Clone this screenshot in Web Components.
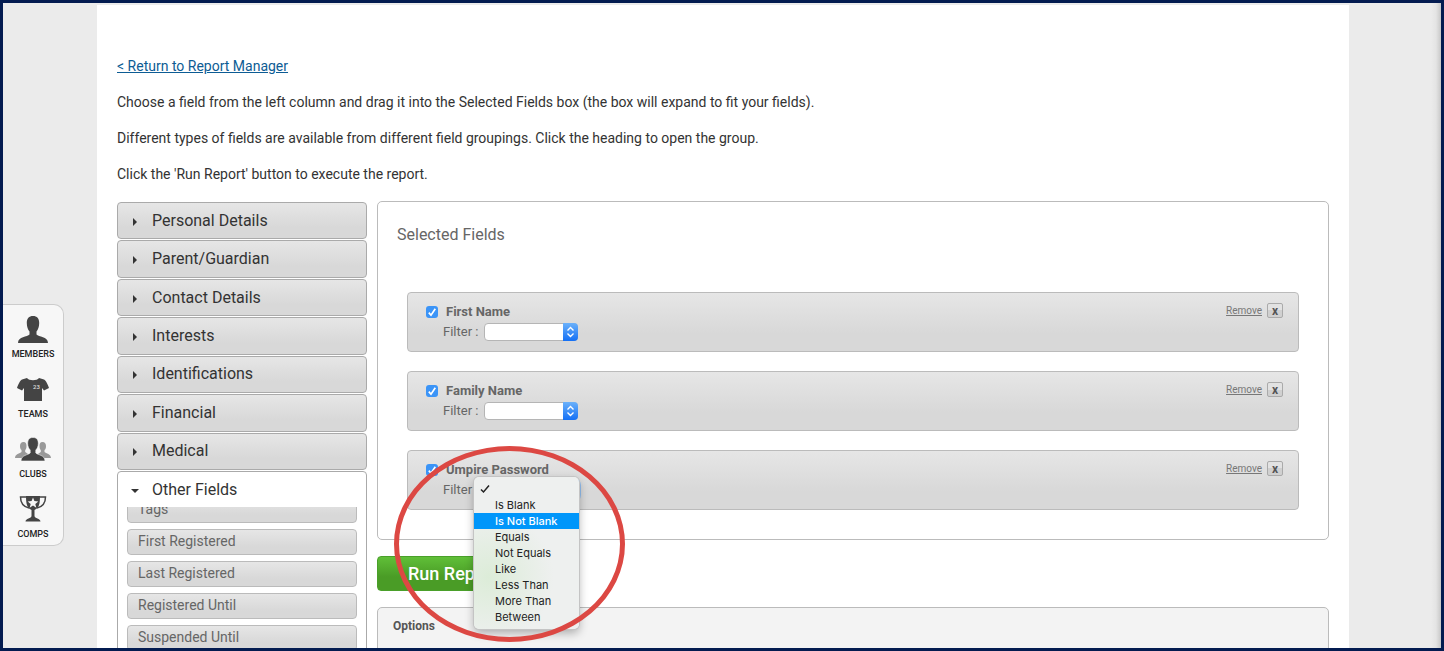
<!DOCTYPE html>
<html lang="en">
<head>
<meta charset="utf-8">
<title>Report Manager</title>
<style>
    body {
        margin: 0;
        font-family: Roboto, "Liberation Sans", sans-serif;
        font-size: 14px;
        line-height: 18px;
        color: #333;
    }
</style>
</head>
<body>
<report-app></report-app>

<script>
const CHECK = '<path d="M2.8 6.6 5 9.2 9.3 2.8" fill="none" stroke="#fff" stroke-width="1.7"/>';

const ICONS = {
    members: `<path fill="#444" d="M18 1c4 0 6.200 2.500 6.200 7 0 4-1.200 6.500-2.700 8.500v3c2 2.500 11.500 2 11.500 8.500H3c0-6.500 9.500-6 11.500-8.500v-3C13 14.500 11.800 12 11.800 8c0-4.500 2.200-7 6.200-7z"/>`,
    teams: `<path fill="#444" d="M12 3c2 3 10 3 12 0l5 1.500c2 1 4 5.500 5 8.500l-5 2.500-2-2.500v13H9V13l-2 2.500L2 13c1-3 3-7.500 5-8.500z"/>
            <text x="18" y="14" fill="#ddd" font-size="6">23</text>`,
    clubs: `<g fill="#999"><path d="M8.500 7c2.500 0 3 2 3 4 0 2-.5 3.500-1.300 4v2c1 1 4.300 1.500 4.300 6H0c0-4 5-4.500 6.500-6v-2C5.500 14.500 5 13 5 11c0-2 1-4 3.500-4z"/>
            <path d="M27.500 7c-2.500 0-3 2-3 4 0 2 .5 3.500 1.300 4v2c-1 1-4.300 1.500-4.300 6H36c0-4-5-4.500-6.500-6v-2c1-.5 1.500-2 1.500-4 0-2-1-4-3.500-4z"/></g>
            <path fill="#444" stroke="#f7f7f7" stroke-width=".6" d="M18 2.500c4 0 5.300 2.500 5.300 6 0 3-1 5-2.500 6.500v3c2 2 9.200 2 9.200 8H6c0-6 7.200-6 9.200-8v-3c-1.500-1.500-2.500-3.500-2.500-6.500 0-3.500 1.300-6 5.300-6z"/>`,
    comps: `<path fill="#444" d="M11 1h14c0 8-1 12-5.500 14v6c0 2.500 6 2.500 6 5.500h-15c0-3 6-3 6-5.500v-6C12 13 11 9 11 1z"/>
            <path fill="none" stroke="#444" stroke-width="1.500" d="M11 2H5.500c0 6 2 9.500 8.500 11M25 2h5.500c0 6-2 9.500-8.500 11"/>
            <path fill="#f7f7f7" d="m18 2.500 1.400 3.600 3.900.3-3 2.500 1 3.800-3.300-2.100-3.300 2.100 1-3.800-3-2.500 3.900-.3z"/>`
};

class SideLink extends HTMLElement {
    constructor() {
        super();
        this.attachShadow({ mode: 'open' });
    }

    connectedCallback() {
        this.shadowRoot.innerHTML = `
            <style>
                :host { display: block; }
                a {
                    display: flex;
                    flex-direction: column;
                    align-items: center;
                    gap: 3px;
                    color: #222;
                    font-size: 9px;
                    font-weight: 500;
                    line-height: 12px;
                    text-decoration: none;
                }
            </style>
            <a href="#${this.getAttribute('icon')}">
                <svg width="36" height="30" viewBox="0 0 36 30" aria-hidden="true">${ICONS[this.getAttribute('icon')]}</svg>
                <slot></slot>
            </a>
        `;
    }
}

class SideDock extends HTMLElement {
    constructor() {
        super();
        this.attachShadow({ mode: 'open' });
        this.shadowRoot.innerHTML = `
            <style>
                :host {
                    display: grid;
                    gap: 15px;
                    width: 60px;
                    padding: 10px 0 5px;
                    background: #f7f7f7;
                    border: 1px solid #ccc;
                    border-left: none;
                    border-radius: 0 10px 10px 0;
                }
            </style>
            <slot></slot>
        `;
    }
}

class FieldGroup extends HTMLElement {
    constructor() {
        super();
        this.attachShadow({ mode: 'open' });
    }

    connectedCallback() {
        const open = this.hasAttribute('open');
        this.shadowRoot.innerHTML = `
            <style>
                :host {
                    display: flex;
                    flex-direction: column;
                    box-sizing: border-box;
                    border: 1px solid #aaa;
                    border-radius: 4px;
                    background: linear-gradient(#e6e6e6, #d8d8d8 70%);
                }
                :host([open]) { background: #fff; }
                button {
                    flex: 1;
                    display: flex;
                    align-items: center;
                    gap: 12px;
                    min-height: 35px;
                    padding: 0 12px;
                    border: none;
                    background: none;
                    color: #333;
                    font: inherit;
                    font-size: 16px;
                    line-height: 20px;
                    text-align: left;
                    cursor: pointer;
                }
                svg { margin-top: 2px; }
                .list {
                    display: flex;
                    flex-direction: column;
                    gap: 6px;
                    box-sizing: border-box;
                    height: 150px;
                    padding: 0 9px 6px;
                    overflow-y: auto;
                    scrollbar-width: none;
                }
            </style>
            <button type="button" aria-expanded="${open}">
                <svg width="10" height="10" aria-hidden="true"><path fill="#333" d="${open ? 'M1 3h8L5 7z' : 'M3 1v8l4-4z'}"/></svg>
                ${this.getAttribute('heading')}
            </button>
            ${open ? '<div class="list"><slot></slot></div>' : ''}
        `;
    }

    scrollList(top) {
        this.shadowRoot.querySelector('.list').scrollTop = top;
    }
}

class FieldItem extends HTMLElement {
    constructor() {
        super();
        this.attachShadow({ mode: 'open' });
        this.shadowRoot.innerHTML = `
            <style>
                :host {
                    display: block;
                    flex: none;
                    box-sizing: border-box;
                    height: 26px;
                    padding: 2px 10px;
                    border: 1px solid #bbb;
                    border-radius: 4px;
                    background: linear-gradient(#e6e6e6, #d8d8d8 70%);
                    color: #666;
                    cursor: move;
                }
            </style>
            <slot></slot>
        `;
    }
}

class SelectedField extends HTMLElement {
    constructor() {
        super();
        this.attachShadow({ mode: 'open' });
    }

    connectedCallback() {
        this.shadowRoot.innerHTML = `
            <style>
                :host {
                    display: flex;
                    justify-content: space-between;
                    align-items: flex-start;
                    position: relative;
                    box-sizing: border-box;
                    height: 60px;
                    padding: 9px 15px 0 18px;
                    border: 1px solid #bbb;
                    border-radius: 4px;
                    background: linear-gradient(#e6e6e6, #d8d8d8 70%);
                    color: #666;
                    font-size: 13px;
                }
                .name, .filter, .actions { display: flex; align-items: center; }
                .name { gap: 8px; height: 20px; font-weight: 700; }
                .filter { gap: 6px; height: 20px; padding-left: 17px; }
                .box, .drop { display: grid; }
                .box > *, .drop > * { grid-area: 1 / 1; }
                svg { display: block; pointer-events: none; }
                input {
                    appearance: none;
                    width: 12px;
                    height: 12px;
                    margin: 0;
                    border-radius: 3px;
                    background: #3b94f7;
                }
                select {
                    appearance: none;
                    width: 94px;
                    height: 18px;
                    padding: 0 20px 0 6px;
                    border: 1px solid #b5b5b5;
                    border-radius: 4px;
                    background: #fff;
                    font: inherit;
                    font-size: 11px;
                }
                :host([expanded]) select { box-shadow: 0 0 0 3px #93bff0; }
                .drop svg { justify-self: end; }
                .actions { gap: 5px; padding-top: 1px; }
                a { color: #777; font-size: 10px; line-height: 15px; }
                .actions button {
                    width: 16px;
                    height: 15px;
                    padding: 0;
                    border: 1px solid #aaa;
                    border-radius: 2px;
                    background: linear-gradient(#e2e2e2 50%, #d0d0d0 50%);
                    color: #555;
                    font: inherit;
                    font-size: 12px;
                    font-weight: 700;
                    line-height: 12px;
                }
            </style>
            <div>
                <div class="name">
                    <span class="box">
                        <input type="checkbox" id="active" checked>
                        <svg width="12" height="12">${CHECK}</svg>
                    </span>
                    <label for="active">${this.getAttribute('name')}</label>
                </div>
                <div class="filter">
                    <label for="filter">Filter :</label>
                    <span class="drop">
                        <select id="filter"><option value=""></option></select>
                        <svg width="15" height="18">
                            <defs><linearGradient id="blue" x2="0" y2="1"><stop stop-color="#6bb1fa"/><stop offset="1" stop-color="#1470f5"/></linearGradient></defs>
                            <path fill="url(#blue)" d="M0 0h11a4 4 0 0 1 4 4v10a4 4 0 0 1-4 4H0z"/>
                            <path fill="none" stroke="#fff" stroke-width="1.400" d="M4.500 7.500 7.500 4.500l3 3M4.500 10.500l3 3 3-3"/>
                        </svg>
                    </span>
                </div>
            </div>
            <div class="actions">
                <a href="#remove">Remove</a>
                <button type="button" aria-label="Remove ${this.getAttribute('name')}">x</button>
            </div>
            <slot></slot>
        `;
    }
}

class FilterMenu extends HTMLElement {
    constructor() {
        super();
        this.attachShadow({ mode: 'open' });
    }

    connectedCallback() {
        const options = ['', 'Is Blank', 'Is Not Blank', 'Equals', 'Not Equals', 'Like', 'Less Than', 'More Than', 'Between'];
        this.shadowRoot.innerHTML = `
            <style>
                :host {
                    display: block;
                    position: absolute;
                    z-index: 2;
                    top: 26px;
                    left: 66px;
                    width: 105px;
                    padding: 4px 0;
                    border-radius: 5px;
                    background: radial-gradient(circle at 15px 100px, #dcecd8, #eef0ef 65px);
                    box-shadow: 0 0 0 1px #c4c4c4, 0 4px 10px rgba(0,0,0,0.3);
                    color: #222;
                    font-family: Inter, "Liberation Sans", sans-serif;
                    font-size: 11px;
                    line-height: 16px;
                }
                ul { margin: 0; padding: 0; list-style: none; }
                li { height: 16px; padding-left: 21px; white-space: nowrap; }
                li.hover { background: #0096fa; color: #fff; font-weight: 500; }
                li.current { padding-left: 6px; }
            </style>
            <ul role="listbox" aria-label="Filter">
                ${options.map((text) => {
                    if (!text) {
                        return '<li class="current" role="option" aria-selected="true"><svg width="10" height="14"><path fill="none" stroke="#222" stroke-width="1.500" d="M1 8.500 3.500 11 9 4.500"/></svg></li>';
                    }
                    return `<li role="option"${text === 'Is Not Blank' ? ' class="hover"' : ''}>${text}</li>`;
                }).join('')}
            </ul>
        `;
    }
}

class FocusRing extends HTMLElement {
    constructor() {
        super();
        this.attachShadow({ mode: 'open' });
        this.shadowRoot.innerHTML = `
            <style>
                :host {
                    display: block;
                    position: absolute;
                    z-index: 3;
                    top: -5px;
                    left: -14px;
                    box-sizing: border-box;
                    width: 231px;
                    height: 196px;
                    border: 5px solid #dc4843;
                    border-radius: 50%;
                    pointer-events: none;
                }
            </style>
        `;
    }
}

class ReportApp extends HTMLElement {
    constructor() {
        super();
        this.attachShadow({ mode: 'open' });
    }

    connectedCallback() {
        this.render();
        this.shadowRoot.querySelector('field-group[open]').scrollList(10);
    }

    render() {
        this.shadowRoot.innerHTML = `
            <style>
                :host {
                    display: grid;
                    grid-template-columns: 94px 1fr 92px;
                    box-sizing: border-box;
                    height: 100vh;
                    overflow: hidden;
                    border: 3px solid #031b50;
                    background: linear-gradient(to left, #c8c8c8, #e4e4e4 5px, #ebebeb 10px);
                }
                side-dock { align-self: start; margin-top: 301px; }
                main {
                    padding: 52px 20px 0;
                    border-top: 2px solid #ebebeb;
                    background: #fff;
                }
                p { margin: 0 0 18px; }
                p a { color: #0d5c94; }
                .builder {
                    display: grid;
                    grid-template-columns: 250px 1fr;
                    gap: 10px;
                    align-items: start;
                }
                .groups { display: grid; gap: 1px; padding-top: 1px; }
                .closed {
                    display: grid;
                    grid-auto-rows: 1fr;
                    gap: 1px;
                    min-height: 268px;
                }
                .selected {
                    padding: 22px 29px 29px;
                    border: 1px solid #bbb;
                    border-radius: 5px;
                }
                h2 {
                    margin: 0 -10px 47px;
                    color: #666;
                    font-size: 16px;
                    font-weight: 400;
                    line-height: 21px;
                }
                .fields { display: grid; gap: 19px; }
                .run {
                    display: block;
                    height: 35px;
                    margin: 16px 0;
                    padding: 0 30px;
                    border: 1px solid #4aa02a;
                    border-radius: 4px;
                    background: linear-gradient(#60bf38, #4a9c26 60%);
                    color: #fff;
                    font: inherit;
                    font-size: 18px;
                    font-weight: 500;
                }
                .options {
                    height: 120px;
                    padding: 9px 15px;
                    border: 1px solid #bbb;
                    border-radius: 5px;
                    background: #f3f3f3;
                }
                h3 { margin: 0; color: #555; font-size: 12px; line-height: 18px; }
            </style>
            <side-dock>
                <side-link icon="members">MEMBERS</side-link>
                <side-link icon="teams">TEAMS</side-link>
                <side-link icon="clubs">CLUBS</side-link>
                <side-link icon="comps">COMPS</side-link>
            </side-dock>
            <main>
                <p><a href="#reports">&lt; Return to Report Manager</a></p>
                <p>Choose a field from the left column and drag it into the Selected Fields box (the box will expand to fit your fields).</p>
                <p>Different types of fields are available from different field groupings. Click the heading to open the group.</p>
                <p>Click the 'Run Report' button to execute the report.</p>
                <div class="builder">
                    <div class="groups">
                        <div class="closed">
                            <field-group heading="Personal Details"></field-group>
                            <field-group heading="Parent/Guardian"></field-group>
                            <field-group heading="Contact Details"></field-group>
                            <field-group heading="Interests"></field-group>
                            <field-group heading="Identifications"></field-group>
                            <field-group heading="Financial"></field-group>
                            <field-group heading="Medical"></field-group>
                        </div>
                        <field-group heading="Other Fields" open>
                            <field-item>Tags</field-item>
                            <field-item>First Registered</field-item>
                            <field-item>Last Registered</field-item>
                            <field-item>Registered Until</field-item>
                            <field-item>Suspended Until</field-item>
                        </field-group>
                    </div>
                    <div>
                        <section class="selected">
                            <h2>Selected Fields</h2>
                            <div class="fields">
                                <selected-field name="First Name"></selected-field>
                                <selected-field name="Family Name"></selected-field>
                                <selected-field name="Umpire Password" expanded>
                                    <filter-menu></filter-menu>
                                    <focus-ring></focus-ring>
                                </selected-field>
                            </div>
                        </section>
                        <button class="run" type="button">Run Report</button>
                        <section class="options">
                            <h3>Options</h3>
                        </section>
                    </div>
                </div>
            </main>
        `;
    }
}

customElements.define('side-link', SideLink);
customElements.define('side-dock', SideDock);
customElements.define('field-group', FieldGroup);
customElements.define('field-item', FieldItem);
customElements.define('selected-field', SelectedField);
customElements.define('filter-menu', FilterMenu);
customElements.define('focus-ring', FocusRing);
customElements.define('report-app', ReportApp);
</script>
</body>
</html>
